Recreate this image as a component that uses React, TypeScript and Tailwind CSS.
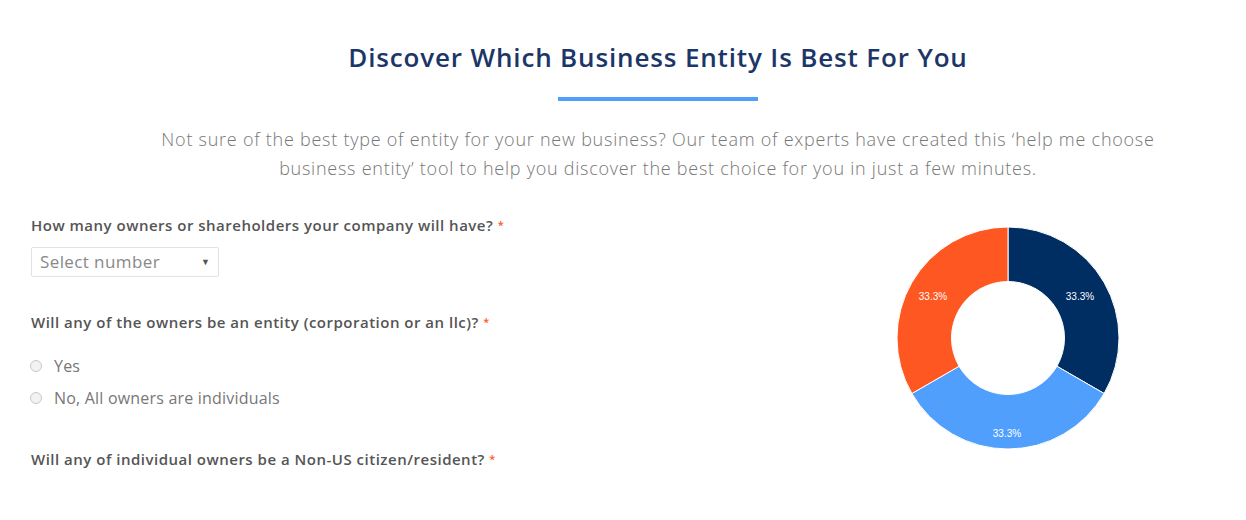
import React from "react";

function Donut() {
  return (
    <svg width="224" height="224" viewBox="0 0 224 224" className="block">
      <path d="M112 1 A111 111 0 0 1 208.13 167.5 L160.93 140.25 A56.5 56.5 0 0 0 112 55.5 Z" fill="#002d62" stroke="#fff" strokeWidth="1" />
      <path d="M208.13 167.5 A111 111 0 0 1 15.87 167.5 L63.07 140.25 A56.5 56.5 0 0 0 160.93 140.25 Z" fill="#519ffd" stroke="#fff" strokeWidth="1" />
      <path d="M15.87 167.5 A111 111 0 0 1 112 1 L112 55.5 A56.5 56.5 0 0 0 63.07 140.25 Z" fill="#ff5722" stroke="#fff" strokeWidth="1" />
      <g fill="#fff" fontSize="10" fontFamily="'Liberation Sans', Arial, sans-serif" textAnchor="middle">
        <text x="184" y="74">33.3%</text>
        <text x="111" y="211">33.3%</text>
        <text x="37" y="74">33.3%</text>
      </g>
    </svg>
  );
}

function Radio({ label }: { label: string }) {
  return (
    <label className="flex items-center gap-[12px] h-[32px]">
      <span className="w-[12px] h-[12px] rounded-full border border-[#c8c8c8] bg-[#f2f2f2] ml-[-1px]"></span>
      <span className="text-[16px] tracking-[0.2px] text-[#777]">{label}</span>
    </label>
  );
}

function Question({ text, className }: { text: string; className?: string }) {
  return (
    <p className={"text-[15px] leading-[20px] font-semibold tracking-[0.5px] text-[#555] " + (className ?? "")}>
      {text} <span className="text-[#ff5722] text-[11px] align-top">*</span>
    </p>
  );
}

export default function App() {
  return (
    <div className="bg-white w-[1246px] h-[520px] overflow-hidden" style={{ fontFamily: "'Open Sans', sans-serif" }}>
      <header className="flex flex-col items-center pt-[40px] pl-[70px]">
        <h1 className="text-[26px] leading-[34px] font-semibold text-[#1b3667] tracking-[0.85px]">Discover Which Business Entity Is Best For You</h1>
        <div className="w-[200px] h-[4px] bg-[#519ffd] mt-[23px]"></div>
        <p className="text-[18px] leading-[29px] font-light text-[#777] text-center mt-[24px] w-[1060px] tracking-[0.75px]">
          Not sure of the best type of entity for your new business? Our team of experts have created this ‘help me choose
          <br />
          business entity’ tool to help you discover the best choice for you in just a few minutes.
        </p>
      </header>
      <main className="flex px-[31px] mt-[32px]">
        <div className="flex-1 flex flex-col">
          <Question text="How many owners or shareholders your company will have?" />
          <div className="mt-[12px] w-[188px] h-[30px] border border-[#e2e2e2] rounded-[2px] flex items-center justify-between px-[8px]">
            <span className="text-[17px] tracking-[0.4px] text-[#888]">Select number</span>
            <span className="text-[9px] text-[#555]">▼</span>
          </div>
          <Question text="Will any of the owners be an entity (corporation or an llc)?" className="mt-[35px]" />
          <div className="mt-[18px] flex flex-col">
            <Radio label="Yes" />
            <Radio label="No, All owners are individuals" />
          </div>
          <Question text="Will any of individual owners be a Non-US citizen/resident?" className="mt-[35px]" />
        </div>
        <div className="mr-[95px] mt-[11px]">
          <Donut />
        </div>
      </main>
    </div>
  );
}
